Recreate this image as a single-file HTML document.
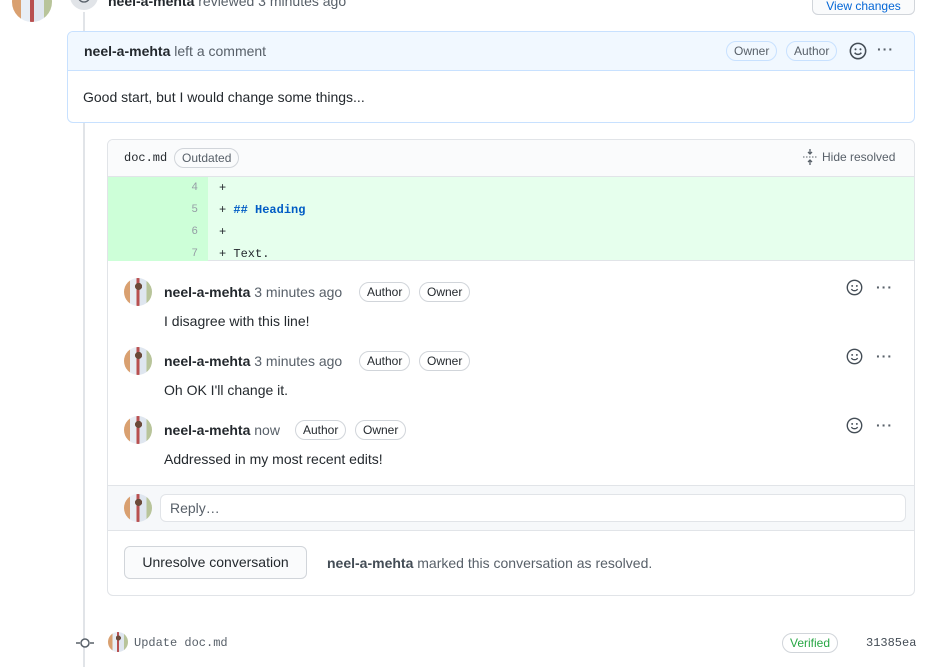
<!DOCTYPE html>
<html><head><meta charset="utf-8"><style>
*{box-sizing:border-box;margin:0;padding:0}
body{width:930px;height:667px;overflow:hidden;background:#fff;font-family:"Liberation Sans",sans-serif;font-size:14px;color:#24292e;position:relative}
.a{position:absolute}
.av{position:absolute;border-radius:50%;background:radial-gradient(circle at 52% 30%,#6b4a3a 0 14%,transparent 15%),linear-gradient(90deg,#d9a070 0 22%,#e8eef5 22% 45%,#b85050 45% 55%,#dfe6ef 55% 80%,#b8c49a 80%);}
.pill{position:absolute;border:1px solid #d1d5da;border-radius:10px;font-size:12px;padding:0 7px;line-height:18px;color:#24292e}
.b{font-weight:bold}
.g{color:#586069}
.mono{font-family:"Liberation Mono",monospace;font-size:12px}
.dots{position:absolute;font-weight:bold;color:#586069;letter-spacing:1px;font-size:14px}
</style></head><body>
<div class="a" style="left:83px;top:10px;width:2px;height:657px;background:#e1e4e8"></div>
<div class="av" style="left:12px;top:-18px;width:40px;height:40px"></div>
<div class="a" style="left:68px;top:-20px;width:32px;height:32px;border-radius:50%;background:#e1e4e8;border:2px solid #fff"></div>
<svg class="a" style="left:76px;top:-12px" width="16" height="16" viewBox="0 0 16 16"><circle cx="8" cy="8" r="6" fill="none" stroke="#586069" stroke-width="1.3"/></svg>
<div class="a" style="left:108px;top:-7px;font-size:14px"><span class="b">neel-a-mehta</span> <span class="g">reviewed 3 minutes ago</span></div>
<div class="a" style="left:812px;top:-10px;width:103px;height:25px;border:1px solid #d1d5da;border-radius:6px;background:#fafbfc;color:#0366d6;font-size:12px;text-align:center;line-height:30px">View changes</div>

<div class="a" style="left:67px;top:31px;width:848px;height:92px;border:1px solid #c8e1ff;border-radius:6px;overflow:hidden;background:#fff">
 <div style="height:39px;background:#f1f8ff;border-bottom:1px solid #c8e1ff;position:relative">
  <div class="a" style="left:16px;top:11px"><span class="b">neel-a-mehta</span> <span class="g">left a comment</span></div>
  <div class="pill" style="left:658px;top:9px;border-color:#c8e1ff;color:#586069">Owner</div>
  <div class="pill" style="left:718px;top:9px;border-color:#c8e1ff;color:#586069">Author</div>
  <svg class="a" style="left:781px;top:10px" width="18" height="18" viewBox="0 0 16 16"><circle cx="8" cy="8" r="6.8" fill="none" stroke="#444d56" stroke-width="1.4"/><circle cx="5.8" cy="6.5" r="0.9" fill="#444d56"/><circle cx="10.2" cy="6.5" r="0.9" fill="#444d56"/><path d="M5 9.5c1.5 2 4.5 2 6 0" fill="none" stroke="#444d56" stroke-width="1.3"/></svg>
  <div class="dots" style="left:809px;top:9px">···</div>
 </div>
 <div class="a" style="left:15px;top:57px">Good start, but I would change some things...</div>
</div>

<div class="a" style="left:107px;top:139px;width:808px;height:457px;border:1px solid #e1e4e8;border-radius:6px;overflow:hidden;background:#fff">
 <div style="height:37px;background:#fafbfc;border-bottom:1px solid #e1e4e8;position:relative">
  <div class="a mono" style="left:16px;top:11px">doc.md</div>
  <div class="pill" style="left:66px;top:8px;color:#586069">Outdated</div>
  <svg class="a" style="left:694px;top:8px" width="16" height="18" viewBox="0 0 16 18"><path d="M8 1v5M6 4l2 2 2-2M8 17v-5M6 14l2-2 2 2" fill="none" stroke="#586069" stroke-width="1.3"/><path d="M1 9h14" stroke="#586069" stroke-dasharray="1.5 1.5"/></svg>
  <div class="a g" style="left:714px;top:10px;font-size:12px">Hide resolved</div>
 </div>
 <div style="height:84px;background:#e6ffed;position:relative;border-bottom:1px solid #e1e4e8">
  <div class="a" style="left:0;top:0;width:100px;height:84px;background:#cdffd8"></div>
  <div class="a mono" style="left:0;top:0;width:90px;text-align:right;color:#959da5;font-size:11px;line-height:22px">4<br>5<br>6<br>7</div>
  <div class="a mono" style="left:111px;top:0;line-height:22px">+<br>+ <b style="color:#005cc5">## Heading</b><br>+<br>+ Text.</div>
 </div>
 <div class="av" style="left:16px;top:138px;width:28px;height:28px"></div>
 <div class="a" style="left:56px;top:144px"><span class="b">neel-a-mehta</span> <span class="g">3 minutes ago</span></div>
 <div class="pill" style="left:251px;top:142px">Author</div><div class="pill" style="left:311px;top:142px">Owner</div>
 <div class="a" style="left:56px;top:173px">I disagree with this line!</div>
 <div class="av" style="left:16px;top:207px;width:28px;height:28px"></div>
 <div class="a" style="left:56px;top:213px"><span class="b">neel-a-mehta</span> <span class="g">3 minutes ago</span></div>
 <div class="pill" style="left:251px;top:211px">Author</div><div class="pill" style="left:311px;top:211px">Owner</div>
 <div class="a" style="left:56px;top:242px">Oh OK I'll change it.</div>
 <div class="av" style="left:16px;top:276px;width:28px;height:28px"></div>
 <div class="a" style="left:56px;top:282px"><span class="b">neel-a-mehta</span> <span class="g">now</span></div>
 <div class="pill" style="left:187px;top:280px">Author</div><div class="pill" style="left:247px;top:280px">Owner</div>
 <div class="a" style="left:56px;top:311px">Addressed in my most recent edits!</div>
 <svg class="a" style="left:738px;top:139px" width="17" height="17" viewBox="0 0 16 16"><circle cx="8" cy="8" r="6.8" fill="none" stroke="#444d56" stroke-width="1.3"/><circle cx="5.8" cy="6.5" r="0.9" fill="#444d56"/><circle cx="10.2" cy="6.5" r="0.9" fill="#444d56"/><path d="M5 9.5c1.5 2 4.5 2 6 0" fill="none" stroke="#444d56" stroke-width="1.2"/></svg>
 <div class="dots" style="left:768px;top:139px">···</div>
 <svg class="a" style="left:738px;top:208px" width="17" height="17" viewBox="0 0 16 16"><circle cx="8" cy="8" r="6.8" fill="none" stroke="#444d56" stroke-width="1.3"/><circle cx="5.8" cy="6.5" r="0.9" fill="#444d56"/><circle cx="10.2" cy="6.5" r="0.9" fill="#444d56"/><path d="M5 9.5c1.5 2 4.5 2 6 0" fill="none" stroke="#444d56" stroke-width="1.2"/></svg>
 <div class="dots" style="left:768px;top:208px">···</div>
 <svg class="a" style="left:738px;top:277px" width="17" height="17" viewBox="0 0 16 16"><circle cx="8" cy="8" r="6.8" fill="none" stroke="#444d56" stroke-width="1.3"/><circle cx="5.8" cy="6.5" r="0.9" fill="#444d56"/><circle cx="10.2" cy="6.5" r="0.9" fill="#444d56"/><path d="M5 9.5c1.5 2 4.5 2 6 0" fill="none" stroke="#444d56" stroke-width="1.2"/></svg>
 <div class="dots" style="left:768px;top:277px">···</div>
 <div class="a" style="left:0;top:345px;width:808px;height:46px;background:#f6f8fa;border-top:1px solid #e1e4e8;border-bottom:1px solid #e1e4e8"></div>
 <div class="av" style="left:16px;top:354px;width:28px;height:28px"></div>
 <div class="a" style="left:52px;top:354px;width:746px;height:28px;border:1px solid #e1e4e8;border-radius:6px;background:#fff;color:#586069;padding-left:9px;line-height:26px">Reply…</div>
 <div class="a" style="left:16px;top:406px;width:183px;height:33px;border:1px solid #d1d5da;border-radius:6px;background:#fafbfc;text-align:center;line-height:31px">Unresolve conversation</div>
 <div class="a" style="left:219px;top:415px"><span class="b" style="color:#444d56">neel-a-mehta</span> <span class="g">marked this conversation as resolved.</span></div>
</div>

<svg class="a" style="left:76px;top:636px" width="18" height="14" viewBox="0 0 18 14"><path d="M0 7h4M14 7h4" stroke="#586069" stroke-width="1.5"/><circle cx="9" cy="7" r="4" fill="#fff" stroke="#586069" stroke-width="1.5"/></svg>
<div class="av" style="left:108px;top:632px;width:20px;height:20px"></div>
<div class="a mono" style="left:134px;top:636px;color:#586069">Update doc.md</div>
<div class="a" style="left:782px;top:633px;border:1px solid #d1d5da;border-radius:10px;padding:0 7px;font-size:12px;line-height:18px;color:#28a745">Verified</div>
<div class="a mono" style="left:866px;top:636px;color:#444d56">31385ea</div>
</body></html>
